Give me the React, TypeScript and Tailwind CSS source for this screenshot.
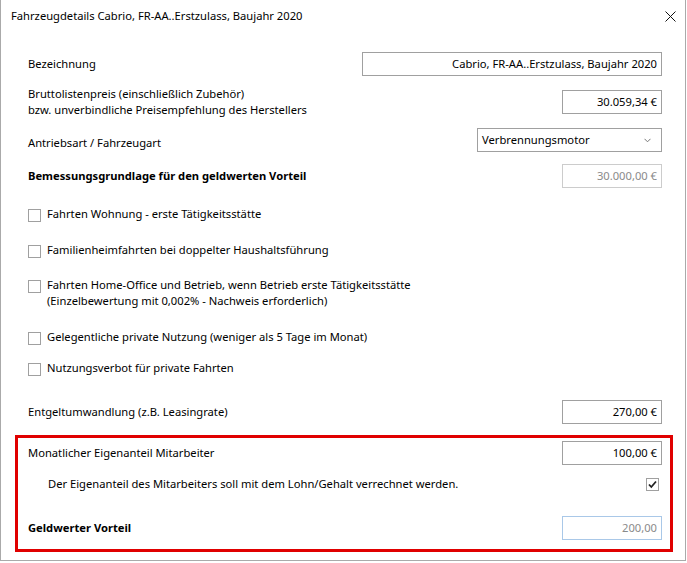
// Fahrzeugdetails dialog: company car benefit form
const font = "font-['Noto_Sans',sans-serif]";

const Box = ({ value, w = "w-[100px]", disabled = false, blue = false }: { value: string; w?: string; disabled?: boolean; blue?: boolean }) => (
  <div
    className={`${w} h-[24px] flex items-center justify-end pr-[4px] border ${
      blue ? "border-[#a9c8e8] text-[#8a8a8a]" : disabled ? "border-[#cccccc] text-[#8a8a8a]" : "border-[#a0a0a0] text-black"
    } bg-white`}
  >
    {value}
  </div>
);

const Check = ({ checked = false }: { checked?: boolean }) => (
  <div className="w-[13px] h-[13px] border border-[#a0a0a0] bg-white flex items-center justify-center shrink-0">
    {checked && (
      <svg width="11" height="11" viewBox="0 0 11 11">
        <path d="M2 5.5 L4.3 8 L9 2.5" fill="none" stroke="#222" strokeWidth="1.8" />
      </svg>
    )}
  </div>
);

const CheckRow = ({ lines, h, mt }: { lines: string[]; h: string; mt: string }) => (
  <div className={`flex items-start gap-[6px] ${h} ${mt}`}>
    <div className="pt-[3px]">
      <Check />
    </div>
    <div className="leading-[16px]">
      {lines.map((l) => (
        <div key={l}>{l}</div>
      ))}
    </div>
  </div>
);

export default function App() {
  return (
    <div className={`${font} text-[11.2px] text-black bg-white w-[686px] h-[561px] border-l border-r border-b border-[#aaaaaa] flex flex-col`}>
      {/* Title bar */}
      <div className="h-[33px] flex items-center justify-between pl-[10px] pr-[9px]">
        <span>Fahrzeugdetails Cabrio, FR-AA..Erstzulass, Baujahr 2020</span>
        <svg width="11" height="11" viewBox="0 0 11 11">
          <path d="M0.5 0.5 L10.5 10.5 M10.5 0.5 L0.5 10.5" stroke="#111" strokeWidth="1" />
        </svg>
      </div>

      <div className="flex flex-col pl-[27px] pr-[23px]">
        <div className="flex items-center justify-between h-[24px] mt-[19px]">
          <span>Bezeichnung</span>
          <Box value="Cabrio, FR-AA..Erstzulass, Baujahr 2020" w="w-[300px]" />
        </div>

        <div className="flex items-center justify-between h-[32px] mt-[10px]">
          <div className="leading-[16px]">
            <div>Bruttolistenpreis (einschließlich Zubehör)</div>
            <div>bzw. unverbindliche Preisempfehlung des Herstellers</div>
          </div>
          <Box value="30.059,34 €" />
        </div>

        <div className="flex items-center justify-between h-[24px] mt-[10px]">
          <span className="pt-[6px]">Antriebsart / Fahrzeugart</span>
          <div className="w-[185px] h-[24px] border border-[#a0a0a0] flex items-center justify-between pl-[4px] pr-[10px]">
            <span>Verbrennungsmotor</span>
            <svg width="7" height="5" viewBox="0 0 7 5">
              <path d="M0.5 0.8 L3.5 3.8 L6.5 0.8" fill="none" stroke="#777" strokeWidth="1" />
            </svg>
          </div>
        </div>

        <div className="flex items-center justify-between h-[24px] mt-[12px]">
          <span className="font-bold">Bemessungsgrundlage für den geldwerten Vorteil</span>
          <Box value="30.000,00 €" disabled />
        </div>

        <CheckRow lines={["Fahrten Wohnung - erste Tätigkeitsstätte"]} h="h-[20px]" mt="mt-[18px]" />
        <CheckRow lines={["Familienheimfahrten bei doppelter Haushaltsführung"]} h="h-[20px]" mt="mt-[16px]" />
        <CheckRow
          lines={[
            "Fahrten Home-Office und Betrieb, wenn Betrieb erste Tätigkeitsstätte",
            "(Einzelbewertung mit 0,002% - Nachweis erforderlich)",
          ]}
          h="h-[36px]"
          mt="mt-[15px]"
        />
        <CheckRow lines={["Gelegentliche private Nutzung (weniger als 5 Tage im Monat)"]} h="h-[20px]" mt="mt-[16px]" />
        <CheckRow lines={["Nutzungsverbot für private Fahrten"]} h="h-[20px]" mt="mt-[11px]" />

        <div className="flex items-center justify-between h-[24px] mt-[20px]">
          <span>Entgeltumwandlung (z.B. Leasingrate)</span>
          <Box value="270,00 €" />
        </div>

        {/* Highlighted section */}
        <div className="mt-[11px] -ml-[13px] -mr-[11px] border-[3px] border-[#e00000] pl-[10px] pr-[8px] pt-[3px] h-[117px] flex flex-col">
          <div className="flex items-center justify-between h-[24px]">
            <span>Monatlicher Eigenanteil Mitarbeiter</span>
            <Box value="100,00 €" />
          </div>
          <div className="flex items-center justify-between h-[20px] mt-[9px] pl-[20px] pr-[3px]">
            <span>Der Eigenanteil des Mitarbeiters soll mit dem Lohn/Gehalt verrechnet werden.</span>
            <Check checked />
          </div>
          <div className="flex items-center justify-between h-[24px] mt-[22px]">
            <span className="font-bold">Geldwerter Vorteil</span>
            <Box value="200,00" blue />
          </div>
        </div>
      </div>
    </div>
  );
}
